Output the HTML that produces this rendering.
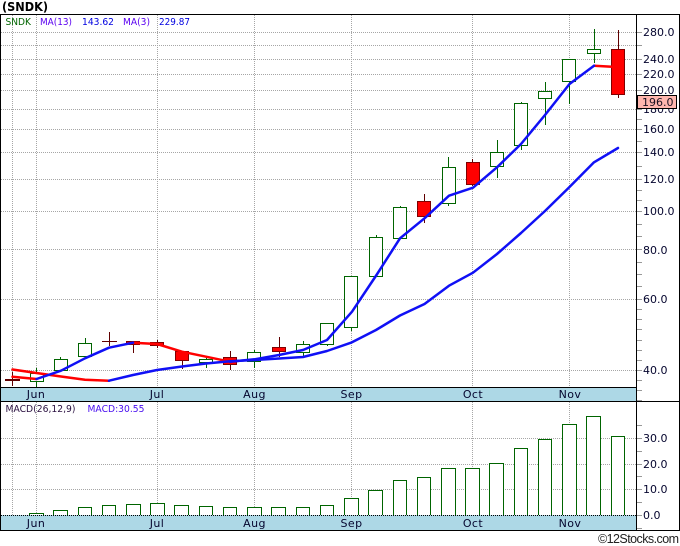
<!DOCTYPE html>
<html lang="en"><head><meta charset="utf-8"><title>SNDK</title>
<style>
html,body{margin:0;padding:0;background:#fff;width:680px;height:546px;overflow:hidden}
svg{display:block}
text{font-family:"DejaVu Sans","Liberation Sans",sans-serif;fill:#05052e}
.ax{font-size:11px}
.mo{font-size:11px;text-anchor:middle;letter-spacing:.4px}
.lg{font-size:10px}
.c{shape-rendering:crispEdges}
</style></head><body>
<svg width="680" height="546" viewBox="0 0 680 546" xmlns="http://www.w3.org/2000/svg">
<rect width="680" height="546" fill="#fff"/>
<g class="c" stroke="#a6a6a6" stroke-width="1" stroke-dasharray="1 1" fill="none">
<path d="M1 32.5H636M1 45.5H636M1 59.5H636M1 74.5H636M1 90.5H636M1 109.5H636M1 129.5H636M1 152.5H636M1 179.5H636M1 211.5H636M1 249.5H636M1 299.5H636M1 370.5H636"/>
<path d="M12.5 15V387M36.5 15V387M157.5 15V387M254.5 15V387M351.5 15V387M472.5 15V387M569.5 15V387"/>
<path d="M1 438.5H636M1 464.5H636M1 489.5H636"/>
<path d="M12.5 402V515M36.5 402V515M157.5 402V515M254.5 402V515M351.5 402V515M472.5 402V515M569.5 402V515"/>
</g>
<g class="c" fill="#fff" stroke="#006400">
<rect x="29.5" y="513.5" width="14" height="4"/>
<rect x="53.5" y="510.5" width="14" height="7"/>
<rect x="78.5" y="507.5" width="13" height="10"/>
<rect x="102.5" y="505.5" width="13" height="12"/>
<rect x="126.5" y="504.5" width="14" height="13"/>
<rect x="150.5" y="503.5" width="14" height="14"/>
<rect x="174.5" y="505.5" width="14" height="12"/>
<rect x="199.5" y="506.5" width="13" height="11"/>
<rect x="223.5" y="507.5" width="13" height="10"/>
<rect x="247.5" y="507.5" width="14" height="10"/>
<rect x="271.5" y="507.5" width="14" height="10"/>
<rect x="296.5" y="507.5" width="13" height="10"/>
<rect x="320.5" y="505.5" width="13" height="12"/>
<rect x="344.5" y="498.5" width="14" height="19"/>
<rect x="368.5" y="490.5" width="14" height="27"/>
<rect x="393.5" y="480.5" width="13" height="37"/>
<rect x="417.5" y="477.5" width="13" height="40"/>
<rect x="441.5" y="468.5" width="14" height="49"/>
<rect x="465.5" y="468.5" width="14" height="49"/>
<rect x="489.5" y="463.5" width="14" height="54"/>
<rect x="514.5" y="448.5" width="13" height="69"/>
<rect x="538.5" y="439.5" width="13" height="78"/>
<rect x="562.5" y="424.5" width="14" height="93"/>
<rect x="586.5" y="416.5" width="14" height="101"/>
<rect x="611.5" y="436.5" width="13" height="81"/>
</g>
<g class="c" fill="none" stroke="#006400">
<path d="M36.5 368V387M60.5 357V360M85.5 338V344M206.5 357V368M254.5 350V368M303.5 341V356M327.5 344V346M351.5 327V331M376.5 235V238M400.5 206V208M448.5 157V206M497.5 140V178M521.5 102V150M545.5 82V125M569.5 81V104M594.5 29V63"/>
</g>
<g class="c" fill="#fff" stroke="#006400">
<rect x="30.5" y="373.5" width="13" height="8"/>
<rect x="54.5" y="359.5" width="13" height="11"/>
<rect x="78.5" y="343.5" width="13" height="13"/>
<rect x="199.5" y="359.5" width="13" height="3"/>
<rect x="247.5" y="352.5" width="13" height="9"/>
<rect x="296.5" y="344.5" width="13" height="8"/>
<rect x="320.5" y="323.5" width="13" height="21"/>
<rect x="344.5" y="276.5" width="13" height="51"/>
<rect x="369.5" y="237.5" width="13" height="39"/>
<rect x="393.5" y="207.5" width="13" height="31"/>
<rect x="442.5" y="167.5" width="13" height="36"/>
<rect x="490.5" y="152.5" width="13" height="14"/>
<rect x="514.5" y="103.5" width="13" height="42"/>
<rect x="538.5" y="91.5" width="13" height="7"/>
<rect x="562.5" y="59.5" width="13" height="22"/>
<rect x="587.5" y="49.5" width="13" height="4"/>
</g>
<g class="c" fill="none" stroke="#600000">
<path d="M12.5 372V386M109.5 332V346M133.5 342V353M157.5 340V348M182.5 360V369M230.5 351V370M279.5 337V357M424.5 194V223M472.5 159V186M618.5 30V98"/>
<path d="M102 341.5H117"/>
<rect x="5.5" y="379.5" width="14" height="1" fill="#800000"/>
</g>
<g class="c" fill="#f00" stroke="#800000">
<rect x="126.5" y="341.5" width="13" height="3"/>
<rect x="150.5" y="342.5" width="13" height="3"/>
<rect x="175.5" y="351.5" width="13" height="9"/>
<rect x="223.5" y="357.5" width="13" height="7"/>
<rect x="272.5" y="347.5" width="13" height="4"/>
<rect x="417.5" y="201.5" width="13" height="15"/>
<rect x="466.5" y="162.5" width="13" height="22"/>
<rect x="611.5" y="49.5" width="13" height="45"/>
</g>
<g fill="none" stroke-width="2.5" stroke-linejoin="round" stroke-linecap="round">
<path stroke="#ff0000" d="M12.5 369.5L36.5 373L61 376.5L85 379.7L109 380.7"/>
<path stroke="#ff0000" d="M12.5 376.7L36.5 379"/>
<path stroke="#ff0000" d="M133 342.7L157 344L182 351.7L206 356.7L230 361.7"/>
<path stroke="#ff0000" d="M594 65.7L612 66.7"/>
<path stroke="#1010f5" d="M109 380.7L133 375L157 370L182 366.5L206 363.5L230 361.3L254.5 360L279 358.5L303 357L327 351L351 342.7L376 330L400 315.5L424.5 304L449 285.7L473 272.7L497 254L521 233L545 211L569.5 187L594 162.3L618 148"/>
<path stroke="#1010f5" d="M36.5 379L61 370.7L85 358.3L109 347.7L133 342.7"/>
<path stroke="#1010f5" d="M230 361.7L254.5 359.3L279 355L303 350L327 340L352 311.7L376.5 275L400 238.3L424.5 218.3L449 195.7L473 187.7L497 167.3L521 144L545 115L569.5 84L594 65.7"/>
</g>
<g class="c">
<rect x="1" y="387" width="635" height="14" fill="#add8e6"/>
<rect x="1" y="515" width="635" height="15" fill="#add8e6"/>
<path d="M0 14.5H680M0 387.5H636M0 401.5H680M0 530.5H680" stroke="#000" fill="none"/>
<path d="M0.5 14V531M636.5 14V531M679.5 14V531" stroke="#000" fill="none"/>
<path d="M1 515.5H636" stroke="#000" stroke-dasharray="1 1" fill="none"/>
<path stroke="#999" fill="none" d="M637 32.5H642M637 45.5H642M637 59.5H642M637 74.5H642M637 90.5H642M637 109.5H642M637 119.5H642M637 129.5H642M637 141.5H642M637 152.5H642M637 166.5H642M637 179.5H642M637 190.5H642M637 200.5H642M637 211.5H642M637 224.5H642M637 236.5H642M637 249.5H642M637 262.5H642M637 274.5H642M637 286.5H642M637 299.5H642M637 309.5H642M637 319.5H642M637 329.5H642M637 340.5H642M637 350.5H642M637 360.5H642M637 370.5H642M637 380.5H642M637 390.5H642M637 400.5H642M637 425.5H642M637 438.5H642M637 451.5H642M637 464.5H642M637 476.5H642M637 489.5H642M637 502.5H642M637 515.5H642M637 528.5H642"/>
</g>
<text x="2" y="11" font-size="12" font-weight="700" textLength="46" lengthAdjust="spacingAndGlyphs" style="fill:#000">(SNDK)</text>
<text class="lg" x="5.5" y="25" textLength="25.5" lengthAdjust="spacingAndGlyphs" style="fill:#006400">SNDK</text>
<text class="lg" x="40" y="25" textLength="32" lengthAdjust="spacingAndGlyphs" style="fill:#5a00f0">MA(13)</text>
<text class="lg" x="82" y="25" textLength="32" lengthAdjust="spacingAndGlyphs" style="fill:#0000e0">143.62</text>
<text class="lg" x="123" y="25" textLength="27" lengthAdjust="spacingAndGlyphs" style="fill:#5a00f0">MA(3)</text>
<text class="lg" x="159" y="25" textLength="31" lengthAdjust="spacingAndGlyphs" style="fill:#0000e0">229.87</text>
<text class="lg" x="5.5" y="412" textLength="70" lengthAdjust="spacingAndGlyphs" style="fill:#2a1040">MACD(26,12,9)</text>
<text class="lg" x="87.5" y="412" textLength="57" lengthAdjust="spacingAndGlyphs" style="fill:#4a10f0">MACD:30.55</text>
<g class="ax">
<text x="643" y="36">280.0</text>
<text x="643" y="63">240.0</text>
<text x="643" y="78">220.0</text>
<text x="643" y="94">200.0</text>
<text x="643" y="113">180.0</text>
<text x="643" y="133">160.0</text>
<text x="643" y="156">140.0</text>
<text x="643" y="183">120.0</text>
<text x="643" y="215">100.0</text>
<text x="643" y="254">80.0</text>
<text x="643" y="303">60.0</text>
<text x="643" y="374">40.0</text>
<text x="643" y="442">30.0</text>
<text x="643" y="468">20.0</text>
<text x="643" y="493">10.0</text>
<text x="643" y="519">0.0</text>
</g>
<rect class="c" x="637.5" y="95.5" width="39" height="13" fill="#ffb6ae" stroke="#000"/>
<text class="ax" x="642" y="106" style="fill:#1a1020">196.0</text>
<g class="mo">
<text x="36" y="398">Jun</text><text x="157" y="398">Jul</text><text x="254.5" y="398">Aug</text><text x="351.5" y="398">Sep</text><text x="473" y="398">Oct</text><text x="570" y="398">Nov</text>
<text x="36" y="527">Jun</text><text x="157" y="527">Jul</text><text x="254.5" y="527">Aug</text><text x="351.5" y="527">Sep</text><text x="473" y="527">Oct</text><text x="570" y="527">Nov</text>
</g>
<text x="598" y="543" font-size="12.5" textLength="81" lengthAdjust="spacing" style="font-family:'Liberation Sans',sans-serif;fill:#222">©12Stocks.com</text>
</svg>
</body></html>
